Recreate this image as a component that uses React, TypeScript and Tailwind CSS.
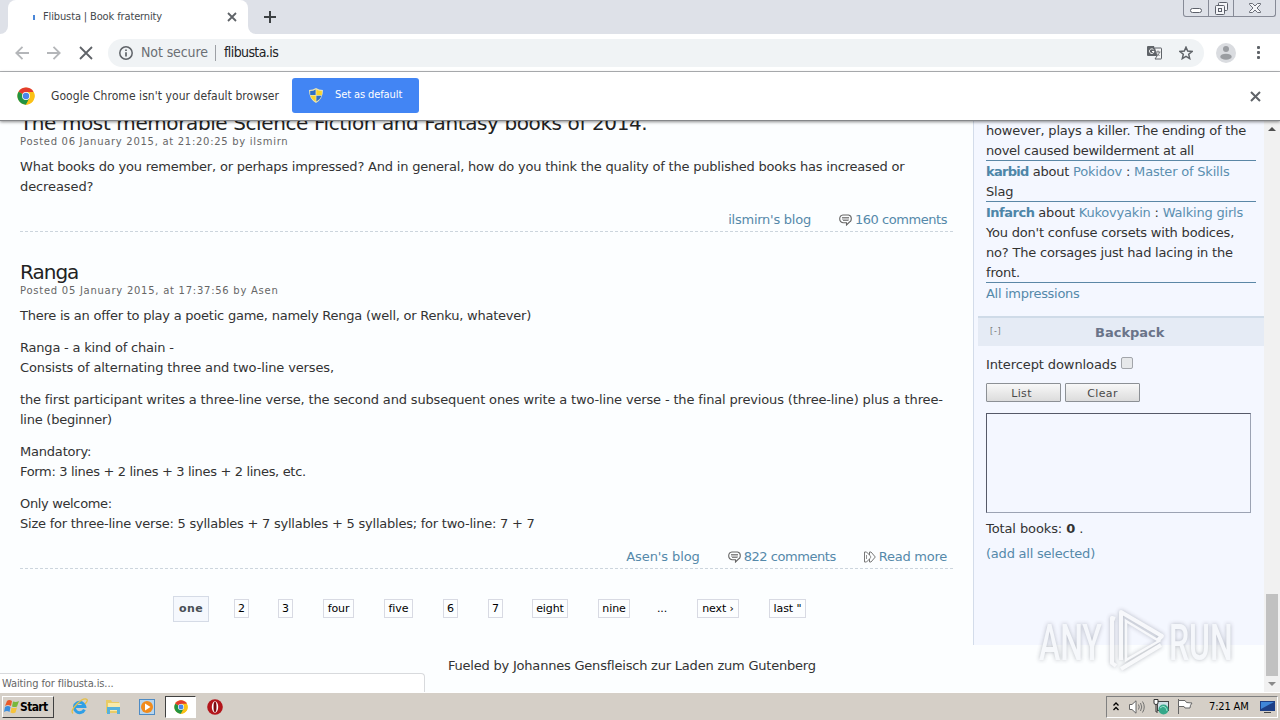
import React from 'react';
import clsx from 'clsx';

const ChromeLogo = ({ size }: { size: number }) => (
  <svg width={size} height={size} viewBox="0 0 48 48" className="shrink-0">
    <circle cx="24" cy="24" r="23" fill="#fbc116" />
    <path d="M24 24 L4.1 12.5 A23 23 0 0 1 43.9 12.5 Z" fill="#e33b2e" />
    <path d="M4.1 12.5 A23 23 0 0 0 24 47 L34 29.5 L24 24 Z" fill="#229342" />
    <path d="M24 13 H44.2 A23 23 0 0 1 24 47 L33.5 29.5 Z" fill="#fbc116" />
    <circle cx="24" cy="24" r="10.5" fill="#fff" />
    <circle cx="24" cy="24" r="8.5" fill="#4a86ea" />
  </svg>
);

const Cross = ({ size, width = 2, color = '#5f6368' }: { size: number; width?: number; color?: string }) => (
  <svg width={size} height={size} viewBox={`0 0 ${size} ${size}`} className="shrink-0">
    <path d={`M1 1 L${size - 1} ${size - 1} M${size - 1} 1 L1 ${size - 1}`} stroke={color} strokeWidth={width} />
  </svg>
);

const TabStrip = () => (
  <div className="flex h-[34px] justify-between bg-[#dee1e8]">
    <div className="flex">
      <div className="w-2 bg-white">
        <div className="h-full rounded-br-lg bg-[#dee1e8]" />
      </div>
      <div className="flex w-[240px] items-center rounded-t-lg bg-white pl-[25px]">
        <div className="h-[5px] w-[2px] bg-[#4a86d8]" />
        <span className="ml-2 w-[184px] whitespace-nowrap text-[11px] tracking-[-0.13px] text-[#45494d]">
          Flibusta | Book fraternity
        </span>
        <Cross size={10} width={1.8} />
      </div>
      <div className="w-2 bg-white">
        <div className="h-full rounded-bl-lg bg-[#dee1e8]" />
      </div>
      <svg width="12" height="12" viewBox="0 0 12 12" className="ml-2 mt-[11px]">
        <path d="M6 0V12M0 6H12" stroke="#3c4043" strokeWidth="2" />
      </svg>
    </div>
    <div className="mr-1 flex h-[17px] w-[93px] rounded-b-[3px] border border-t-0 border-[#868a96]">
      <div className="flex w-[25px] justify-center border-r border-[#868a96] pt-2">
        <div className="h-[5px] w-3 rounded-sm border border-[#5c606a] bg-white" />
      </div>
      <div className="flex w-[25px] justify-center border-r border-[#868a96] pt-[2px]">
        <svg width="13" height="13" viewBox="0 0 13 13" fill="#f4f5f8" stroke="#5c606a">
          <rect x="3.5" y=".5" width="9" height="8" rx="1" />
          <rect x=".5" y="3.5" width="9" height="9" rx="1" />
          <rect x="3.5" y="6.5" width="3" height="3" />
        </svg>
      </div>
      <div className="flex flex-1 justify-center pt-[3px]">
        <svg width="12" height="10" viewBox="0 0 12 10">
          <path d="M.5 .5H3.5L6 3L8.5 .5H11.5V1.5L8 5L11.5 8.5V9.5H8.5L6 7L3.5 9.5H.5V8.5L4 5L.5 1.5Z" fill="#f4f5f8" stroke="#5c606a" strokeWidth=".9" />
        </svg>
      </div>
    </div>
  </div>
);

const Toolbar = () => (
  <div className="flex h-[38px] items-center border-b border-[#b4b6b9] bg-white pl-[15px]">
    <svg width="14" height="14" viewBox="0 0 14 14" fill="none" stroke="#b4b6b9" strokeWidth="1.8">
      <path d="M14 7H1.5M7.5 .8L1.3 7L7.5 13.2" />
    </svg>
    <svg width="14" height="14" viewBox="0 0 14 14" fill="none" stroke="#b4b6b9" strokeWidth="1.8" className="ml-[18px]">
      <path d="M0 7H12.5M6.5 .8L12.7 7L6.5 13.2" />
    </svg>
    <div className="ml-[18px] flex">
      <Cross size={14} width={1.8} />
    </div>
    <div className="ml-[15px] flex h-7 w-[1096px] items-center rounded-full bg-[#f0f3f5] pl-[11px]">
      <svg width="14" height="14" viewBox="0 0 14 14" fill="none" stroke="#5f6368" strokeWidth="1.5">
        <circle cx="7" cy="7" r="6.2" />
        <path d="M7 6.2V10.5M7 3.5V5" strokeWidth="1.7" />
      </svg>
      <span className="ml-2 w-[67px] whitespace-nowrap text-[14px] tracking-[-0.1px] text-[#6b6f74]">Not secure</span>
      <div className="ml-[7px] h-4 w-px bg-[#9da0a5]" />
      <span className="ml-2 whitespace-nowrap text-[14px] tracking-[-0.6px] text-[#202124]">flibusta.is</span>
      <div className="ml-auto mr-[11px] flex items-center">
        <svg width="15" height="15" viewBox="0 0 15 15" className="mr-[17px]">
          <path d="M1 1H7L10 11H1Q0 11 0 10V2Q0 1 1 1Z" fill="#5f6368" />
          <path d="M7.5 3H14Q14.5 3 14.5 3.5V13.5Q14.5 14 14 14H8L10 11Z" fill="#f4f5f6" stroke="#5f6368" />
          <path d="M6.5 4.7A2.3 2.3 0 1 0 7 6.5H5" fill="none" stroke="#fff" />
          <path d="M9 7H13.5M11 5.5V7M12.5 7Q12 10 9.5 11M10 8.5L12.5 11" fill="none" stroke="#5f6368" strokeWidth=".8" />
        </svg>
        <svg width="14" height="14" viewBox="0 0 14 14" fill="none" stroke="#5f6368" strokeWidth="1.5">
          <path d="M7 1.2L8.7 5.1L13 5.5L9.7 8.3L10.7 12.6L7 10.4L3.3 12.6L4.3 8.3L1 5.5L5.3 5.1Z" />
        </svg>
      </div>
    </div>
    <svg width="20" height="20" viewBox="0 0 20 20" className="ml-3">
      <circle cx="10" cy="10" r="10" fill="#dadce0" />
      <circle cx="10" cy="6" r="3" fill="#9a9da1" />
      <ellipse cx="10" cy="13.7" rx="5.7" ry="3" fill="#9a9da1" />
    </svg>
    <svg width="3" height="13" viewBox="0 0 3 13" fill="#5f6368" className="ml-[21px]">
      <rect width="3" height="3" y="0" rx="1" />
      <rect width="3" height="3" y="5" rx="1" />
      <rect width="3" height="3" y="10" rx="1" />
    </svg>
  </div>
);

const InfoBar = () => (
  <div className="relative z-10 flex h-[49px] items-center border-b border-[#85878a] bg-white pl-[17px] shadow-[0_1px_3px_rgba(0,0,0,0.45)]">
    <ChromeLogo size={18} />
    <span className="ml-4 w-[241px] whitespace-nowrap text-[12px] tracking-[0.06px] text-[#3a3a3a]">
      Google Chrome isn't your default browser
    </span>
    <div className="mb-[2px] flex h-[35px] w-[127px] items-center rounded-[3px] bg-[#4285f4] pl-[17px]">
      <svg width="14" height="15" viewBox="0 0 14 15">
        <path d="M7 0Q10 2 14 2Q14 11 7 15Q0 11 0 2Q4 2 7 0Z" fill="#e9e4b4" />
        <path d="M6.6 1.5V7H1.2V3Q4.5 3 6.6 1.5Z" fill="#2f6fc6" />
        <path d="M7.4 1.5V7H12.8V3Q9.5 3 7.4 1.5Z" fill="#f8d42c" />
        <path d="M6.6 13.5V7.7H1.4Q2.5 11 6.6 13.5Z" fill="#f8d42c" />
        <path d="M7.4 13.5V7.7H12.6Q11.5 11 7.4 13.5Z" fill="#2f6fc6" />
      </svg>
      <span className="ml-3 whitespace-nowrap text-[11px] tracking-[-0.1px] text-white">Set as default</span>
    </div>
    <div className="ml-auto mr-[19px]">
      <Cross size={11} width={2} />
    </div>
  </div>
);

const CommentIcon = () => (
  <svg width="13" height="12" viewBox="0 0 13 12" fill="none" stroke="#666" className="mr-[3px]">
    <path d="M4 1H9.5Q12.3 1.5 12.3 4.6Q12.3 7.5 10.5 8L7.5 11V8.8H4Q.7 8 .7 4.8Q.7 1.5 4 1Z" strokeWidth="1.1" />
    <path d="M3 3.5H10M3 5H10M4 6.5H9.5" strokeWidth=".8" />
  </svg>
);

const MoreIcon = () => (
  <svg width="12" height="12" viewBox="0 0 12 12" fill="none" stroke="#777" className="mr-[3px]">
    <path d="M.5 1H2.5L5.5 4V1H7L11.3 6L7 11H5.5V8L2.5 11H.5Z" />
    <path d="M5.5 4L7 6L5.5 8M2.5 4V8" strokeWidth=".8" />
  </svg>
);

const Paragraph = ({ lines }: { lines: [string, string][] }) => (
  <p className="mb-3">
    {lines.map(([text, tracking]) => (
      <span key={text} className={clsx('block whitespace-nowrap', tracking)}>
        {text}
      </span>
    ))}
  </p>
);

const pages: [string, string][] = [
  ['2', 'ml-[25px] w-[15px]'],
  ['3', 'ml-[29px] w-[15px]'],
  ['four', 'ml-[30px] w-[31px]'],
  ['five', 'ml-[30px] w-[29px]'],
  ['6', 'ml-[30px] w-[15px]'],
  ['7', 'ml-[30px] w-[15px]'],
  ['eight', 'ml-[29px] w-[36px]'],
  ['nine', 'ml-[30px] w-[32px]'],
  ['...', 'ml-[22px] w-[20px] border-transparent'],
  ['next ›', 'ml-[25px] w-[42px]'],
  ['last "', 'ml-[30px] w-[37px]'],
];

const Pager = () => (
  <div className="ml-[153px] mt-[27px] flex h-[26px] items-center text-[11px] leading-[18px] text-black">
    <div className="flex h-[26px] w-[36px] items-center justify-center border border-[#d5dbe6] bg-[#f5f8fd] text-[11px] font-bold tracking-[0.4px] text-[#494f55]">
      one
    </div>
    {pages.map(([label, place]) => (
      <div
        key={label}
        className={clsx('mb-px flex h-[19px] items-center justify-center whitespace-nowrap border pt-px', label !== '...' && 'border-[#d8dae3]', place)}
      >
        {label}
      </div>
    ))}
  </div>
);

const MainColumn = () => (
  <main className="w-[973px] shrink-0 pl-5 pr-5">
    <h2 className="-mt-[10px] h-[25px] whitespace-nowrap text-[20px] leading-[25px] tracking-[-0.4px] text-[#222]">
      The most memorable Science Fiction and Fantasy books of 2014.
    </h2>
    <div className="h-[21px] whitespace-nowrap text-[10px] leading-[11px] tracking-[0.71px] text-[#666]">
      Posted 06 January 2015, at 21:20:25 by ilsmirn
    </div>
    <Paragraph
      lines={[
        ['What books do you remember, or perhaps impressed? And in general, how do you think the quality of the published books has increased or', 'tracking-[-0.2px]'],
        ['decreased?', 'tracking-[-0.1px]'],
      ]}
    />
    <div className="-mt-px flex h-[24px] items-center justify-end border-b border-dashed border-[#ccd5dd] pr-[6px] text-[#5589aa]">
      <span className="tracking-[-0.25px]">ilsmirn's blog</span>
      <span className="ml-7 flex items-center tracking-[-0.45px]"><CommentIcon />160 comments</span>
    </div>

    <h2 className="mt-7 h-[25px] whitespace-nowrap text-[20px] leading-[25px] tracking-[-1px] text-[#222]">Ranga</h2>
    <div className="h-[21px] whitespace-nowrap text-[10px] leading-[11px] tracking-[0.74px] text-[#666]">
      Posted 05 January 2015, at 17:37:56 by Asen
    </div>
    <Paragraph lines={[['There is an offer to play a poetic game, namely Renga (well, or Renku, whatever)', 'tracking-[-0.23px]']]} />
    <Paragraph
      lines={[
        ['Ranga - a kind of chain -', 'tracking-[-0.2px]'],
        ['Consists of alternating three and two-line verses,', 'tracking-[-0.13px]'],
      ]}
    />
    <Paragraph
      lines={[
        [
          'the first participant writes a three-line verse, the second and subsequent ones write a two-line verse - the final previous (three-line) plus a three-',
          'tracking-[-0.155px]',
        ],
        ['line (beginner)', 'tracking-[-0.25px]'],
      ]}
    />
    <Paragraph
      lines={[
        ['Mandatory:', 'tracking-[-0.2px]'],
        ['Form: 3 lines + 2 lines + 3 lines + 2 lines, etc.', 'tracking-[-0.33px]'],
      ]}
    />
    <Paragraph
      lines={[
        ['Only welcome:', 'tracking-[-0.35px]'],
        ['Size for three-line verse: 5 syllables + 7 syllables + 5 syllables; for two-line: 7 + 7', 'tracking-[-0.235px]'],
      ]}
    />
    <div className="-mt-px flex h-[24px] items-center justify-end border-b border-dashed border-[#ccd5dd] pr-[6px] text-[#5589aa]">
      <span>Asen's blog</span>
      <span className="ml-7 flex items-center tracking-[-0.45px]"><CommentIcon />822 comments</span>
      <span className="ml-7 flex items-center tracking-[-0.25px]"><MoreIcon />Read more</span>
    </div>
    <Pager />
    <div className="ml-[428px] mt-[34px] whitespace-nowrap tracking-[-0.21px]">Fueled by Johannes Gensfleisch zur Laden zum Gutenberg</div>
  </main>
);

const Sidebar = () => (
  <aside className="h-[524px] w-[291px] shrink-0 border-l border-[#d3dcea] bg-[#f4f7ff] pl-1">
    <div className="whitespace-nowrap pl-2 pr-2 tracking-[-0.2px]">
      <div className="mb-px h-10 border-b border-[#5b87a6]">
        <div>however, plays a killer. The ending of the</div>
        <div className="tracking-[-0.26px]">novel caused bewilderment at all</div>
      </div>
      <div className="mb-px h-10 border-b border-[#5b87a6]">
        <div>
          <b className="tracking-[-0.7px] text-[#4e86a8]">karbid</b> about <span className="text-[#5b8fb0]">Pokidov</span> :{' '}
          <span className="text-[#5b8fb0]">Master of Skills</span>
        </div>
        <div>Slag</div>
      </div>
      <div className="mb-px h-20 border-b border-[#5b87a6]">
        <div>
          <b className="tracking-[-0.5px] text-[#4e86a8]">Infarch</b> about <span className="text-[#5b8fb0]">Kukovyakin</span> :{' '}
          <span className="text-[#5b8fb0]">Walking girls</span>
        </div>
        <div>You don't confuse corsets with bodices,</div>
        <div>no? The corsages just had lacing in the</div>
        <div>front.</div>
      </div>
      <div className="tracking-[-0.3px] text-[#5589aa]">All impressions</div>
    </div>
    <div className="mt-3 flex h-[30px] items-center border-t-2 border-[#cfdbe8] bg-[#e5ebf5]">
      <span className="w-[117px] pl-3 text-[8px] tracking-[0.8px] text-[#777]">[-]</span>
      <b className="pt-px text-[13px] tracking-[0px] text-[#6a7489]">Backpack</b>
    </div>
    <div className="whitespace-nowrap pl-2 pt-[9px]">
      <div className="flex items-center">
        Intercept downloads
        <span className="mb-1 ml-1 h-3 w-3 rounded-[2px] border border-[#a2a5aa] bg-[#e6e8ea]" />
      </div>
      <div className="mt-2 flex gap-1 text-[11px] leading-[17px] tracking-[0.35px] text-[#4a4a4a]">
        <div className="h-[19px] w-[75px] rounded-[1px] border border-[#8c9095] bg-linear-to-b from-[#f8f8f8] to-[#dcdcdc] pr-1 pt-px text-center">List</div>
        <div className="h-[19px] w-[75px] rounded-[1px] border border-[#8c9095] bg-linear-to-b from-[#f8f8f8] to-[#dcdcdc] pt-px text-center">Clear</div>
      </div>
      <div className="mt-[11px] h-[100px] w-[265px] border border-[#9ca3b3] border-l-[#555968] border-t-[#555968]" />
      <div className="mt-[6px]">Total books: <b>0</b> .</div>
      <div className="mt-[5px] tracking-[-0.22px] text-[#5589aa]">(add all selected)</div>
    </div>
  </aside>
);

const Scrollbar = () => (
  <div className="flex w-4 flex-col items-center bg-[#f1f1f1]">
    <svg width="8" height="4" viewBox="0 0 8 4" className="mt-[6px]">
      <path d="M0 4L4 0L8 4Z" fill="#505050" />
    </svg>
    <div className="mt-[463px] h-[82px] w-3 bg-[#c1c1c1]" />
    <svg width="8" height="4" viewBox="0 0 8 4" className="mt-[6px]">
      <path d="M0 0L4 4L8 0Z" fill="#8a8a8a" />
    </svg>
  </div>
);

const Watermark = () => (
  <div className="absolute left-[1039px] top-[488px] flex h-[64px] items-center text-[#f6f8fb] opacity-90 drop-shadow-[0_0_2px_rgba(100,105,120,0.5)]">
    <span className="mt-1 inline-block w-[68px] origin-left scale-x-[0.64] font-[Roboto,sans-serif] text-[50px] font-medium leading-none">ANY</span>
    <svg width="58" height="64" viewBox="0 0 58 64" fill="none" stroke="#f8f9fb">
      <path d="M14 51V3L55 27L51 31" strokeWidth="4" strokeLinejoin="round" />
      <path d="M19 12L52 32L19 51Z" strokeWidth="2.5" />
      <path d="M8 10L5 9V54L9 57M14 60L54 36" strokeWidth="4" strokeLinejoin="round" />
    </svg>
    <span className="ml-[4px] mt-1 inline-block w-[62px] origin-left scale-x-[0.64] font-[Roboto,sans-serif] text-[50px] font-medium leading-none">RUN</span>
  </div>
);

const Taskbar = () => (
  <div className="flex h-[28px] items-center border-t border-white bg-[#d5cfc7] font-['DejaVu_Sans_Condensed','DejaVu_Sans',sans-serif] text-[11px] text-black">
    <div className="ml-[2px] flex h-[22px] w-[52px] items-center border border-b-[#404040] border-l-white border-r-[#404040] border-t-white pl-px">
      <svg width="15" height="15" viewBox="0 0 15 15">
        <path d="M3 2Q5 0 8 2L7 7Q4 5 1 7Z" fill="#e95b2b" />
        <path d="M9 2.5Q12 3.5 15 2L13 7.5Q11 8.5 8 7.5Z" fill="#79b83b" />
        <path d="M1 8Q4 6 6.5 8L5.5 13Q3 11 0 13Z" fill="#3b8ede" />
        <path d="M7.5 8.5Q10 9.5 13 8.5L11.5 13.5Q9 15 6.5 13.5Z" fill="#f6c33b" />
      </svg>
      <b className="ml-px pt-px text-[12px] tracking-[-0.65px]">Start</b>
    </div>
    <svg width="17" height="17" viewBox="0 0 17 17" className="ml-[17px]" fill="none">
      <path d="M13.4 11.6A5.2 5.2 0 1 1 13.8 8.6H4" stroke="#2f9fe6" strokeWidth="3" />
      <path d="M2 15.5Q-1 13 6 6T16 1.5Q17 3 14 6" stroke="#e6bf45" strokeWidth="1.3" />
    </svg>
    <svg width="16" height="16" viewBox="0 0 16 16" className="ml-[17px]">
      <path d="M1 1H6L7 3H14V14H1Z" fill="#e9cb66" />
      <path d="M3 4H15V12H3Z" fill="#f9eaaa" />
      <path d="M2 8H15V15H12V11H5V15H2Z" fill="#57b1db" />
    </svg>
    <svg width="16" height="16" viewBox="0 0 16 16" className="ml-[18px]">
      <rect x=".5" y=".5" width="15" height="15" fill="#b7d5ee" stroke="#4e8bc4" />
      <circle cx="8" cy="8" r="6" fill="#f18b1c" />
      <path d="M6 4.5L11.5 8L6 11.5Z" fill="#fff" />
    </svg>
    <div className="ml-[10px] flex h-[22px] w-[31px] items-center justify-center border border-b-white border-l-[#404040] border-r-white border-t-[#404040] bg-white">
      <ChromeLogo size={14} />
    </div>
    <svg width="16" height="16" viewBox="0 0 16 16" className="ml-[11px]">
      <circle cx="8" cy="8" r="7.8" fill="#b3151b" />
      <ellipse cx="8" cy="8" rx="3.2" ry="5.8" fill="#fff" />
      <ellipse cx="8" cy="8" rx="1.5" ry="5.2" fill="#7c0a10" />
    </svg>
    <div className="ml-auto mr-[2px] flex h-[22px] w-[172px] items-center border border-b-white border-l-[#808080] border-r-white border-t-[#808080] pl-[6px]">
      <svg width="6" height="9" viewBox="0 0 6 9" fill="none" stroke="#000" strokeWidth="1.3">
        <path d="M.5 3.5L3 1L5.5 3.5M.5 8L3 5.5L5.5 8" />
      </svg>
      <svg width="16" height="14" viewBox="0 0 16 14" className="ml-[10px]" stroke="#666">
        <path d="M.5 4.5H3L7 .8V13.2L3 9.5H.5Z" fill="#fff" />
        <path d="M9.5 4.5Q11 7 9.5 9.5M11.5 3Q14 7 11.5 11M13.5 1.5Q17 7 13.5 12.5" fill="none" strokeWidth=".9" />
      </svg>
      <svg width="16" height="16" viewBox="0 0 16 16" className="ml-2">
        <rect x="4.5" y="2.5" width="11" height="9" fill="#cfe0e6" stroke="#444" />
        <path d="M1 .5V4Q1 5.5 3 5.5T5 4V.5Z" fill="#fff" stroke="#333" />
        <path d="M3 5.5V13H5" fill="none" stroke="#333" />
        <circle cx="10.5" cy="10.5" r="5" fill="#35a889" />
        <path d="M7 9Q10 6 12 8T14 12" fill="none" stroke="#9be0ce" />
      </svg>
      <svg width="16" height="15" viewBox="0 0 16 15" className="ml-2" fill="#fff" stroke="#666">
        <path d="M1.5 0V15" />
        <path d="M1.5 1.5H8L9.5 3.5L15 4Q13 6 13 9H8L7 7.5H1.5Z" />
      </svg>
      <span className="ml-4 w-[41px] whitespace-nowrap pt-px tracking-[-0.15px]">7:21 AM</span>
      <svg width="15" height="14" viewBox="0 0 15 14" className="ml-[10px]">
        <rect x="0" y="1" width="15" height="10" fill="#1d3f86" />
        <path d="M1 2H14L1 9Z" fill="#3f86d8" />
        <path d="M4 12H11V13H4Z" fill="#444" />
      </svg>
    </div>
  </div>
);

const App: React.FC = () => (
  <div className="flex h-[720px] w-[1280px] flex-col overflow-hidden bg-[#fcfeff] font-['DejaVu_Sans_Condensed','DejaVu_Sans',sans-serif]">
    <TabStrip />
    <Toolbar />
    <InfoBar />
    <div className="relative flex h-[571px] overflow-hidden font-['DejaVu_Sans',sans-serif] text-[13px] leading-5 tracking-[-0.1px] text-[#333]">
      <MainColumn />
      <Sidebar />
      <Scrollbar />
      <Watermark />
      {/* Status bubble */}
      <div className="absolute bottom-0 left-0 h-[19px] w-[425px] rounded-tr border border-b-0 border-l-0 border-[#d8dadd] bg-white pl-[2px] font-['DejaVu_Sans_Condensed','DejaVu_Sans',sans-serif] text-[11px] leading-[19px] text-[#666]">
        Waiting for flibusta.is...
      </div>
    </div>
    <Taskbar />
  </div>
);

export default App;
